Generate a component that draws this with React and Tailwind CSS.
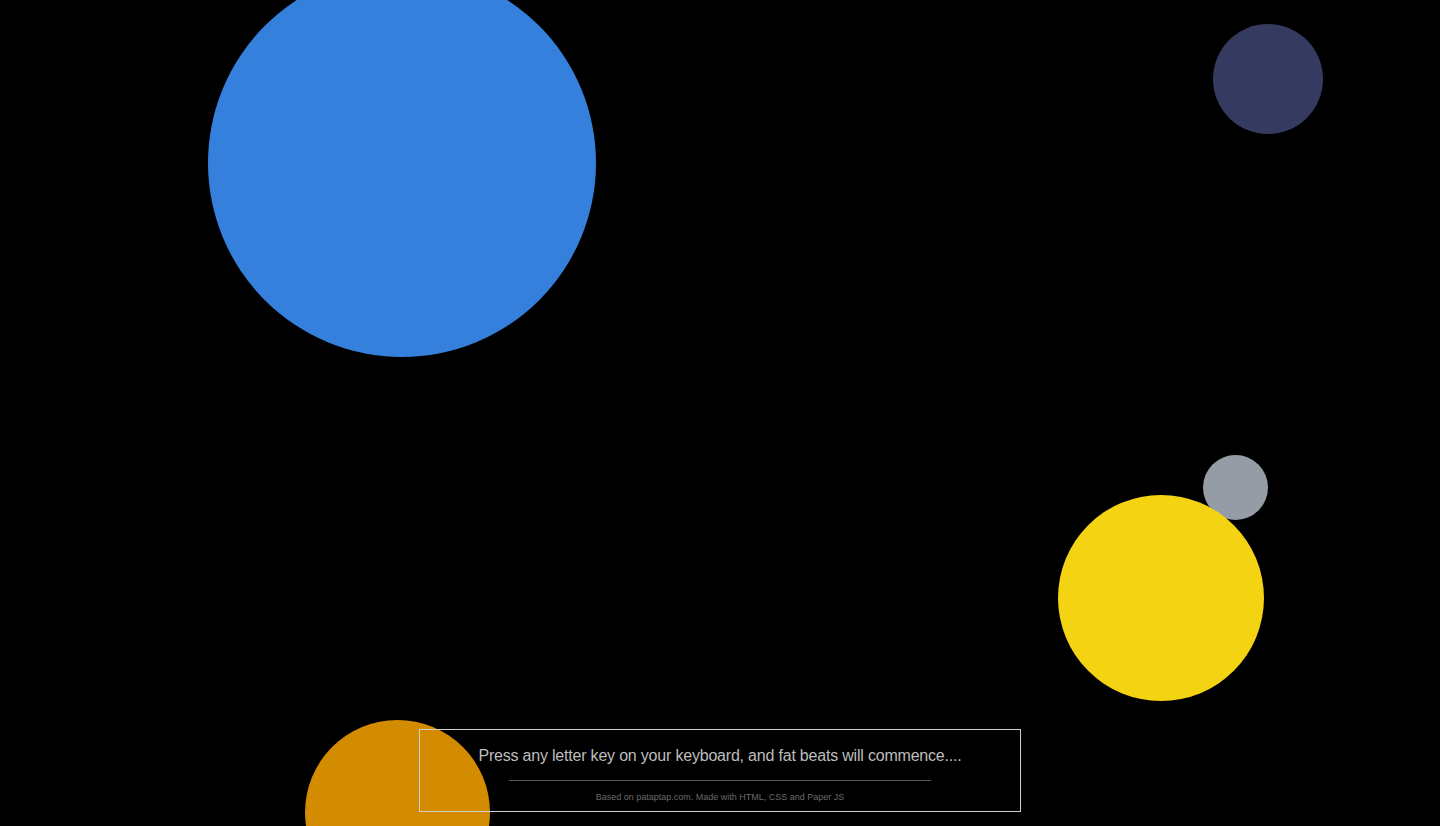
export default function App() {
  const circles = [
    { key: 'blue', cls: 'left-[208px] top-[-31px] w-[388px] h-[388px] bg-[#3480dc]' },
    { key: 'navy', cls: 'left-[1213px] top-[24px] w-[110px] h-[110px] bg-[#353b60]' },
    { key: 'gray', cls: 'left-[1203px] top-[455px] w-[65px] h-[65px] bg-[#959ca6]' },
    { key: 'yellow', cls: 'left-[1058px] top-[495px] w-[206px] h-[206px] bg-[#f4d313]' },
    { key: 'orange', cls: 'left-[305px] top-[720px] w-[185px] h-[185px] bg-[#d38c00]' },
  ];

  return (
    <div className="relative w-full h-[826px] bg-black overflow-hidden flex items-end justify-center pb-[14px]" style={{ fontFamily: '"Liberation Sans", Arial, sans-serif' }}>
      {circles.map(c => (
        <div key={c.key} className={`absolute rounded-full ${c.cls}`} />
      ))}

      <div className="relative w-[602px] border border-[#cfcfcf] flex flex-col items-center pt-[16px] pb-[8px]">
        <p className="text-[16px] leading-[20px] text-[#bdbdbd] tracking-[-0.2px]">
          Press any letter key on your keyboard, and fat beats will commence....
        </p>
        <div className="w-[422px] h-px bg-[#555] mt-[14px]" />
        <p className="text-[9px] leading-[12px] text-[#6a6a6a] mt-[10px]">
          Based on pataptap.com. Made with HTML, CSS and Paper JS
        </p>
      </div>
    </div>
  );
}
